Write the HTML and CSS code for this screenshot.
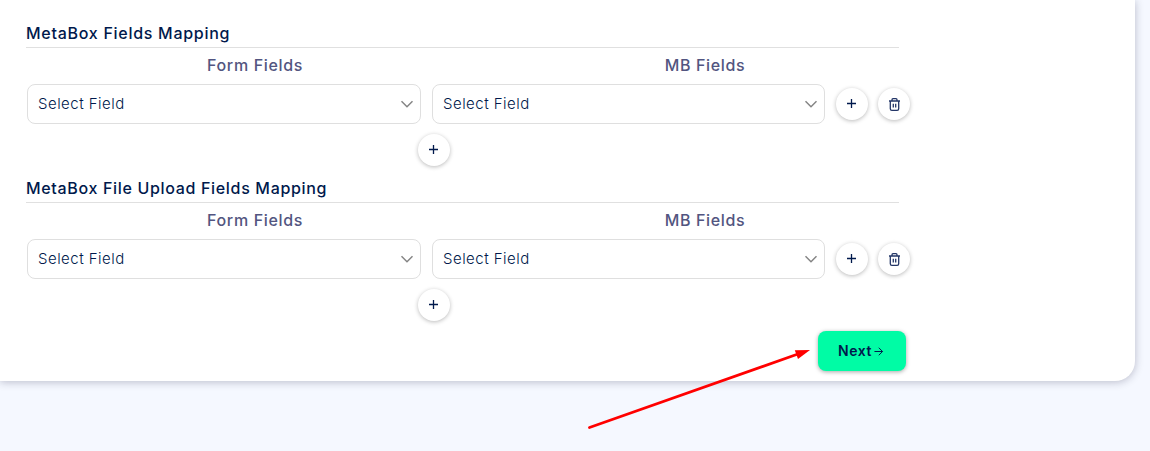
FILE: index.html
```html
<!DOCTYPE html>
<html lang="en">
<head>
<meta charset="utf-8">
<title>MetaBox Fields Mapping</title>
<link rel="stylesheet" href="styles.css">
</head>
<body>
<main class="card">
  <section class="mapping">
    <h2 class="title"><span class="title-main">MetaBox Fields Mapping</span></h2>
    <div class="labels"><span class="label-form">Form Fields</span><span class="label-mb">MB Fields</span></div>
    <div class="row">
      <div class="select"><span>Select Field</span><svg class="chevron" viewBox="0 0 14 8"><path d="M1.500 1.200 7 6.700l5.500-5.500"/></svg></div>
      <div class="select"><span>Select Field</span><svg class="chevron" viewBox="0 0 14 8"><path d="M1.500 1.200 7 6.700l5.500-5.500"/></svg></div>
      <button class="circle" aria-label="Add row"><svg class="plus" viewBox="0 0 9 9"><path d="M0 4.500h9M4.500 0v9"/></svg></button>
      <button class="circle" aria-label="Delete row"><svg class="trash" viewBox="0 0 11 13"><path d="M0 3h11M3 3V1.700q0-1 1-1h3q1 0 1 1V3M1.300 3v7.700q0 1.600 1.600 1.600h5.200q1.600 0 1.600-1.600V3M4.300 5.800v3.700M6.700 5.800v3.700"/></svg></button>
    </div>
    <div class="add"><button class="circle" aria-label="Add field"><svg class="plus" viewBox="0 0 9 9"><path d="M0 4.500h9M4.500 0v9"/></svg></button></div>
  </section>
  <section class="mapping">
    <h2 class="title"><span class="title-file">MetaBox File Upload Fields Mapping</span></h2>
    <div class="labels"><span class="label-form">Form Fields</span><span class="label-mb">MB Fields</span></div>
    <div class="row">
      <div class="select"><span>Select Field</span><svg class="chevron" viewBox="0 0 14 8"><path d="M1.500 1.200 7 6.700l5.500-5.500"/></svg></div>
      <div class="select"><span>Select Field</span><svg class="chevron" viewBox="0 0 14 8"><path d="M1.500 1.200 7 6.700l5.500-5.500"/></svg></div>
      <button class="circle" aria-label="Add row"><svg class="plus" viewBox="0 0 9 9"><path d="M0 4.500h9M4.500 0v9"/></svg></button>
      <button class="circle" aria-label="Delete row"><svg class="trash" viewBox="0 0 11 13"><path d="M0 3h11M3 3V1.700q0-1 1-1h3q1 0 1 1V3M1.300 3v7.700q0 1.600 1.600 1.600h5.200q1.600 0 1.600-1.600V3M4.300 5.800v3.700M6.700 5.800v3.700"/></svg></button>
    </div>
    <div class="add"><button class="circle" aria-label="Add field"><svg class="plus" viewBox="0 0 9 9"><path d="M0 4.500h9M4.500 0v9"/></svg></button></div>
  </section>
  <div class="actions"><button class="next"><span>Next</span><svg class="arrow" viewBox="0 0 10 10"><path d="M.5 5h9M5.300.8 9.500 5 5.300 9.200"/></svg></button></div>
</main>
<svg class="pointer" viewBox="0 0 230 90"><path class="shaft" d="M4.500 82.500 213 9"/><path class="head" d="m225 5-15.200.2L213 14z"/></svg>
</body>
</html>
```
FILE: styles.css
```css
* { box-sizing: border-box; }
body {
  margin: 0;
  height: 451px;
  overflow: hidden;
  background: #f5f8ff;
  color: #00194c;
  font-family: Inter, "Open Sans", sans-serif;
}
.card {
  width: 1135px;
  height: 381px;
  padding: 21px 0 0 26px;
  background: #fff;
  border-radius: 0 0 20px 0;
  box-shadow: 0 1px 8px rgba(30, 30, 60, .28);
}
.mapping { height: 155px; }
.title {
  width: 873px;
  height: 27px;
  margin: 0;
  border-bottom: 1px solid #e0e0e0;
  font-size: 16px;
  font-weight: 500;
  line-height: 25px;
  white-space: nowrap;
}
.title-main { letter-spacing: .72px; }
.title-file { letter-spacing: .67px; }
.labels {
  display: grid;
  grid-template-columns: 458px 442px;
  height: 36px;
  text-align: center;
  font-size: 16px;
  font-weight: 500;
  line-height: 35px;
  letter-spacing: .65px;
  color: #525580;
}
.row {
  display: grid;
  grid-template-columns: 394px 393px 32px 32px;
  column-gap: 11px;
  align-items: center;
  padding-left: 1px;
  height: 40px;
}
.row .circle:last-child { margin-left: -1px; }
.select {
  display: flex;
  align-items: center;
  justify-content: space-between;
  height: 40px;
  padding: 0 6px 0 10px;
  border: 1px solid #dfdfdf;
  border-radius: 8px;
  font-size: 15px;
  font-weight: 300;
  line-height: 38px;
  letter-spacing: .48px;
}
svg { fill: none; overflow: visible; }
.chevron { width: 14px; height: 8px; stroke: #858585; stroke-width: 1.500; }
.circle {
  display: flex;
  align-items: center;
  justify-content: center;
  width: 32px;
  height: 32px;
  padding: 0;
  border: 0;
  border-radius: 50%;
  background: #fff;
  box-shadow: 0 1px 4px rgba(0, 0, 0, .27);
}
.plus { width: 9px; height: 9px; margin: 0 1px 1px 0; stroke: #00194c; stroke-width: 1.300; }
.trash { width: 11px; height: 13px; margin-top: 1px; stroke: #243768; stroke-width: 1.300; }
.add { padding: 10px 0 0 392px; }
.actions { padding-left: 792px; }
.next {
  display: flex;
  align-items: center;
  gap: 2px;
  width: 88px;
  height: 40px;
  padding: 0 0 0 20px;
  border: 0;
  border-radius: 8px;
  background: #00fca5;
  color: #00194c;
  box-shadow: 0 1px 4px rgba(0, 0, 0, .35);
  font: 600 14px/40px Inter, sans-serif;
  letter-spacing: .6px;
}
.arrow { width: 9px; height: 9px; stroke: #00194c; stroke-width: 1.100; }
.pointer { position: absolute; left: 585px; top: 345px; width: 230px; height: 90px; }
.shaft { stroke: #f00; stroke-width: 2.800; stroke-linecap: round; }
.head { fill: #f00; stroke: none; }
```
